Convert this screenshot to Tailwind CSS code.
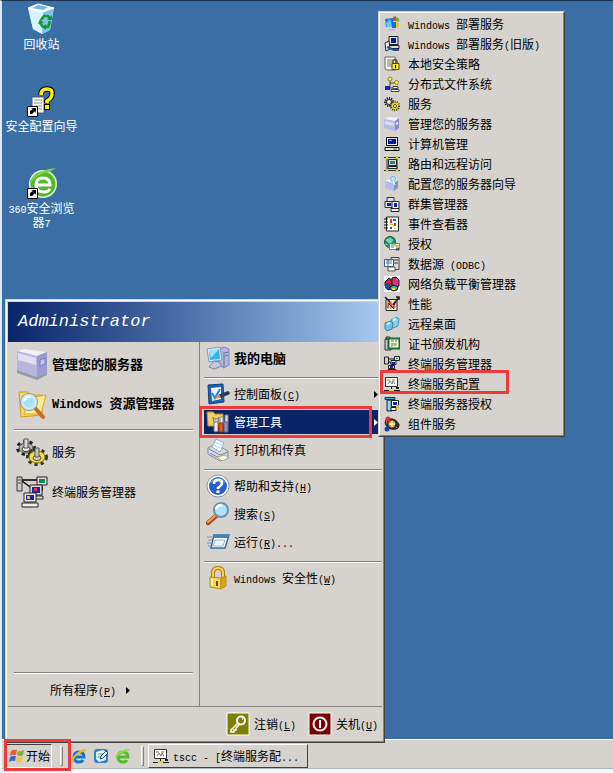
<!DOCTYPE html>
<html lang="zh-CN">
<head>
  <title>Windows Server 2003</title>
  <meta charset="UTF-8">
  <meta name="viewport" content="width=device-width, initial-scale=1.0">
  <script src="https://cdn.jsdelivr.net/npm/@tailwindcss/browser@4"></script>
</head>
<body class="min-h-screen flex flex-col overflow-hidden bg-[#f4fafc] text-black text-xs leading-4 font-['Noto_Sans_CJK_SC',sans-serif] [&_small]:text-[10px] [&_small]:leading-none [&_small]:font-['Liberation_Mono',monospace] [&_small]:whitespace-pre [&_svg]:shrink-0">

  <!-- Desktop -->
  <main class="relative flex-1 bg-[#3a6ea5] border-t border-t-[#16344f] border-l-2 border-l-[#dfe9f0]">
    <div class="flex flex-col items-start pl-0.5 pt-0.5 text-white [&_a]:w-[75px] [&_a]:h-[82px] [&_a]:flex [&_a]:flex-col [&_a]:items-center [&_a]:text-center [&_a]:leading-3 [&_a]:gap-[3px]">
      <a href="#recycle">
        <svg class="size-8" viewBox="0 0 32 32">
          <path d="M2 5L12 1l16 4-4 22-8 4-9-5z" fill="#a9dcf5"/>
          <path d="M2 5l15 4-1 22-9-5z" fill="#d8f3fd"/><path d="M17 9l11-4-4 22-8 4z" fill="#7fc3ea"/>
          <path d="M2 5L12 1l16 4-11 4z" fill="#eefaff" stroke="#fff"/>
          <path d="M6 5l6-3 10 2-5 3z" fill="#75b6df"/>
          <path d="M15 17l3-4h4l2 3M24 18l-2 6h-3M17 24l-3-4" fill="none" stroke="#129a2b" stroke-width="2.6"/>
          <path d="M21 17h5V12zM20 21v6l-4-3zM12 21l2-5 4 4z" fill="#129a2b"/>
        </svg>
        <span>回收站</span>
      </a>
      <a href="#wizard">
        <svg class="size-8" viewBox="0 0 32 32">
          <path d="M6 12h12v16H6z" fill="#fff" stroke="#555"/><path d="M8 15h8M8 18h8M8 21h8M8 24h8" stroke="#888"/>
          <path d="M15 10q0-6 6-6t5 5q0 4-5 7v2" fill="none" stroke="#000" stroke-width="5.500"/><path d="M18 19h6v6h-6z" fill="#000"/>
          <path d="M15 10q0-6 6-6t5 5q0 4-5 7v2" fill="none" stroke="#ffee10" stroke-width="3.500"/><path d="M19 20h4v4h-4z" fill="#ffee10"/>
          <path d="M1.500 21.500h10v10h-10z" fill="#fff" stroke="#000"/><path d="M4 29v-3l3-2-2-1h5v5l-1-2-3 3z"/>
        </svg>
        <span>安全配置向导</span>
      </a>
      <a href="#browser">
        <svg class="size-8" viewBox="0 0 32 32">
          <circle cx="17" cy="17" r="14" fill="#dff6cf"/><circle cx="17" cy="17" r="12.500" fill="#57b72c"/>
          <path d="M10 18h14q0-7-7-7t-7 7q0 7 8 7 4 0 6-3" fill="none" stroke="#fff" stroke-width="3"/>
          <path d="M3 14Q13 2 30 1q-4 3-8 4Q11 7 5 16z" fill="#7ed348"/>
          <path d="M1.500 21.500h10v10h-10z" fill="#fff" stroke="#000"/><path d="M4 29v-3l3-2-2-1h5v5l-1-2-3 3z"/>
        </svg>
        <span><small>360</small>安全浏览<br>器<small>7</small></span>
      </a>
    </div>

    <!-- Start menu -->
    <section class="absolute left-[3px] -bottom-1 z-10 w-[380px] bg-[#d6d3ce] border border-[#d6d3ce] border-r-[#404040] border-b-[#404040]">
      <div class="border border-white border-r-[#848284] border-b-[#848284] p-px">
        <h1 class="h-10 flex items-center pl-2.5 text-white italic text-[17px] font-['Liberation_Mono',monospace] bg-linear-to-r from-[#0a246a] to-[#a6caf0]">Administrator</h1>
        <div class="flex h-[364px]">
          <div class="w-[191px] flex flex-col px-1.5 pt-0.5 [&_button]:h-10 [&_button]:flex [&_button]:items-center [&_button]:gap-1 [&_button]:pl-0.5 [&_button]:text-left">
            <button class="font-bold text-[13px]">
              <svg class="size-8" viewBox="0 0 32 32">
                <path d="M1 3l7-2 22 3-9 4z" fill="#f1f1fd"/><path d="M1 3l20 5v21L1 22z" fill="#b6b6de"/><path d="M21 8l10-4v21l-10 5z" fill="#9a9bd0"/>
                <path d="M2 5l18 5v7L2 12z" fill="#dedef4"/><path d="M24 12l5-2v6l-5 2z" fill="#c8c9f0" stroke="#7a7bc0"/><path d="M1 22l20 7 10-4v2l-10 5L1 25z" fill="#939ba3"/>
              </svg>
              管理您的服务器
            </button>
            <button class="font-bold text-[13px]">
              <svg class="size-8" viewBox="0 0 32 32">
                <path d="M3 4h9l2 3h12v20L5 29z" fill="#f7d864" stroke="#d19e20"/><path d="M8 26l5-16 17-3-5 19z" fill="#ffeb91" stroke="#d9a72c"/>
                <path d="M19 20l8 9" stroke="#c96e26" stroke-width="4" stroke-linecap="round"/>
                <circle cx="13" cy="14" r="7" fill="#a6e4f8" stroke="#dce6ef" stroke-width="3"/><circle cx="13" cy="14" r="8.500" fill="none" stroke="#6f9dbb"/><path d="M8 13q2-5 7-4" stroke="#fff" stroke-width="2" fill="none"/>
              </svg>
              <span><span class="text-xs font-['Liberation_Mono',monospace] whitespace-pre">Windows </span>资源管理器</span>
            </button>
            <hr class="mt-[5px] mb-px border-t-[#848284] border-b border-b-white">
            <button>
              <svg class="size-8" viewBox="0 0 32 32">
                <ellipse cx="10" cy="12" rx="8" ry="6" fill="none" stroke="#222" stroke-width="4" stroke-dasharray="3 3"/><ellipse cx="10" cy="12" rx="7" ry="5" fill="#b4b4b4" stroke="#555"/><ellipse cx="10" cy="13" rx="4" ry="2.500" fill="#eee" stroke="#333"/><path d="M8 3h4v9H8z" fill="#d8d8d8" stroke="#555"/>
                <ellipse cx="21" cy="21" rx="9" ry="7" fill="none" stroke="#3c3705" stroke-width="4" stroke-dasharray="3 3"/><ellipse cx="21" cy="21" rx="8" ry="6" fill="#e8df55" stroke="#81770c"/><ellipse cx="21" cy="22" rx="4" ry="2.500" fill="#d6d3ce" stroke="#554f08"/><path d="M19 12h4v9h-4z" fill="#c4c4c4" stroke="#555"/>
              </svg>
              服务
            </button>
            <button>
              <svg class="size-8" viewBox="0 0 32 32">
                <path d="M5 4h18M6 5l11 8M26 10v5" stroke="#000" stroke-width="1.500"/>
                <path d="M1 1h5v14H1z" fill="#ccc" stroke="#333"/><path d="M2 4h3M2 7h3" stroke="#555"/>
                <path d="M21 1h10v8H21z" fill="#ddd" stroke="#222"/><path d="M23 3h6v4h-6z" fill="#0a8a5a"/>
                <path d="M14 9h12v10H14zM12 20h15v3H12z" fill="#ddd" stroke="#222"/><path d="M16 11h8v6h-8z" fill="#1222c5"/><path d="M18 12h3v3h-3z" fill="#e84040"/>
                <path d="M8 17h12v9H8zM6 27h16v4H6z" fill="#eee" stroke="#222"/><path d="M10 19h8v5h-8z" fill="#1222c5"/><path d="M11 20h3v3h-3z" fill="#f0c020"/>
              </svg>
              终端服务管理器
            </button>
            <hr class="mt-auto border-t-[#848284] border-b border-b-white">
            <button class="pl-9! h-8!">
              <span>所有程序<small>(<u>P</u>)</small></span>
              <svg class="ml-1.5 w-1 h-[7px]" viewBox="0 0 4 7"><path d="M0 0l4 3.500L0 7z"/></svg>
            </button>
          </div>
          <div class="flex-1 flex flex-col border-l border-[#848284] pl-1 pt-0.5 [&_button]:h-6 [&_button]:my-0.5 [&_button]:flex [&_button]:items-center [&_button]:gap-1 [&_button]:pl-0.5 [&_button]:text-left [&_button_svg]:-my-1 [&_hr]:mt-[5px] [&_hr]:mb-px [&_hr]:border-t-[#848284] [&_hr]:border-b [&_hr]:border-b-white">
            <button class="font-bold text-[13px]">
              <svg class="size-6" viewBox="0 0 24 24">
                <path d="M13 3l5-2 5 2v16l-5 3-5-3z" fill="#b5b6df" stroke="#8283b5"/><path d="M18 6v15M19 7l3-1M19 10l3-1" stroke="#6769a5"/>
                <path d="M1 3l13-2 2 13-13 2z" fill="#dce9f5" stroke="#809cb8"/><path d="M3 5l10-2 1 10-10 1z" fill="#35b4f0"/><path d="M3 5l10-2-8 9z" fill="#9ae5fd"/>
                <path d="M8 15l5 1 3 4-8 3-5-2z" fill="#c1c9db" stroke="#7586a5"/>
              </svg>
              我的电脑
            </button>
            <hr>
            <button>
              <svg class="size-6" viewBox="0 0 24 24">
                <path d="M2 3l15-1 1 18-15 2z" fill="#1d61b4" stroke="#15427c"/><path d="M5 6l10-1v12L6 19z" fill="#f2f9ff"/><path d="M6 11l3 5 5-9" fill="none" stroke="#2b83d9" stroke-width="2"/>
                <path d="M14 14l8-3" stroke="#273c59" stroke-width="3.500" stroke-linecap="round"/><path d="M10 16l4-2" stroke="#e79b3d" stroke-width="2.500"/>
              </svg>
              <span class="flex-1">控制面板<small>(<u>C</u>)</small></span>
              <svg class="mr-1 w-1 h-[7px]" viewBox="0 0 4 7"><path d="M0 0l4 3.500L0 7z"/></svg>
            </button>
            <button class="relative bg-[#0a246a] text-white mr-0.5">
              <svg class="size-6" viewBox="0 0 24 24">
                <path d="M1 2h6l2 2h8v12H2z" fill="#f3cf62" stroke="#b98b20"/>
                <path d="M8 10h4v11q-2 2-4 0z" fill="#e8e8ed" stroke="#777"/><path d="M7 7q3 4 6 0l-1 5H8z" fill="#ccc" stroke="#777"/>
                <path d="M14 7h3v7h-3z" fill="#eee" stroke="#888"/><path d="M13 13h4v9h-4z" fill="#e25a2c" stroke="#8e3010"/>
                <path d="M19 5h3v8h-3z" fill="#ddd" stroke="#888"/><path d="M18 12h4v10h-4z" fill="#8297ba" stroke="#54698c"/>
              </svg>
              <span class="flex-1">管理工具</span>
              <svg class="mr-0.5 w-1 h-[7px] fill-white" viewBox="0 0 4 7"><path d="M0 0l4 3.500L0 7z"/></svg>
              <span class="absolute -left-[5px] -top-1 -bottom-1 right-2 border-3 border-[#ee3a3c]"></span>
            </button>
            <button>
              <svg class="size-6" viewBox="0 0 24 24">
                <path d="M2 10l7-4 13 7v6l-8 4-12-7z" fill="#d6dae3" stroke="#878d9b"/><path d="M6 9l4-8 8 4-4 9z" fill="#fff" stroke="#8babca"/><path d="M9 4l7 3M8 7l6 3" stroke="#9ed4ee"/>
                <path d="M3 11l11 6 8-3M4 15l9 5" fill="none" stroke="#7b8290"/><path d="M11 19l5 4 7-3-4-3z" fill="#fffce4" stroke="#a5a279"/>
              </svg>
              打印机和传真
            </button>
            <hr>
            <button>
              <svg class="size-6" viewBox="0 0 24 24">
                <circle cx="12" cy="12" r="11" fill="#fff" stroke="#8790ad"/><circle cx="12" cy="12" r="9" fill="#2860cd"/><path d="M4 9a9 9 0 0116 0q-8-3-16 0z" fill="#6799ec"/>
                <path d="M8 10q0-4 4-4t4 3q0 2-4 5v1" fill="none" stroke="#fff" stroke-width="2.500"/><path d="M10.500 16.500h3v2.500h-3z" fill="#fff"/>
              </svg>
              <span>帮助和支持<small>(<u>H</u>)</small></span>
            </button>
            <button>
              <svg class="size-6" viewBox="0 0 24 24">
                <path d="M10 14l-8 7" stroke="#a84e17" stroke-width="4.500" stroke-linecap="round"/><path d="M9 14l-7 6" stroke="#f1a060" stroke-width="2" stroke-linecap="round"/>
                <circle cx="15" cy="8" r="7" fill="#afe3f8" stroke="#6a91b5" stroke-width="2"/><path d="M10 7q1-4 6-4" fill="none" stroke="#fff" stroke-width="2.500"/>
              </svg>
              <span>搜索<small>(<u>S</u>)</small></span>
            </button>
            <button>
              <svg class="size-6" viewBox="0 0 24 24">
                <path d="M8 5h15l-4 13H5z" fill="#fff" stroke="#376d9f" stroke-width="1.500"/><path d="M8 5h15l-1 3H7z" fill="#3c83bd"/><path d="M9 10h10l-2 6H7z" fill="#e8f3fb" stroke="#98bad5"/><path d="M1 7h5M2 10h4M1 13h4M2 16h3" stroke="#7895ad"/>
              </svg>
              <span>运行<small>(<u>R</u>)...</small></span>
            </button>
            <hr>
            <button>
              <svg class="size-6" viewBox="0 0 24 24">
                <path d="M7 11V7q0-5 5-5t5 5v4" fill="none" stroke="#a87a12" stroke-width="4"/><path d="M7 11V7q0-5 5-5t5 5v4" fill="none" stroke="#f7d54e" stroke-width="2"/>
                <path d="M4 11l11 1v11L4 21z" fill="#f9d550" stroke="#bb8c13"/><path d="M15 12l5-2v10l-5 3z" fill="#d9a421" stroke="#bb8c13"/><path d="M6 13v6" stroke="#fff6b4" stroke-width="2"/><path d="M11 15v5" stroke="#6d4a05" stroke-width="2"/>
              </svg>
              <span><small>Windows </small>安全性<small>(<u>W</u>)</small></span>
            </button>
          </div>
        </div>
        <div class="h-[34px] flex items-center justify-end gap-3 pr-1 border-t border-[#848284] [&_button]:flex [&_button]:items-center [&_button]:gap-1">
          <button>
            <svg class="size-6" viewBox="0 0 24 24">
              <path d="M1 1h22v22H1z" fill="#7f8000" stroke="#fff"/><circle cx="15" cy="8.500" r="4" fill="none" stroke="#fff" stroke-width="2"/><path d="M12 11l-7 7v2h3v-2h2v-2l4-4M16 7h1" fill="none" stroke="#fff" stroke-width="1.500"/>
            </svg>
            <span>注销<small>(<u>L</u>)</small></span>
          </button>
          <button>
            <svg class="size-6" viewBox="0 0 24 24">
              <path d="M1 1h22v22H1z" fill="#7b0004" stroke="#fff"/><circle cx="12" cy="12" r="6.500" fill="none" stroke="#fff" stroke-width="2"/><path d="M12 8v8" stroke="#fff" stroke-width="2"/>
            </svg>
            <span>关机<small>(<u>U</u>)</small></span>
          </button>
        </div>
      </div>
    </section>

    <!-- Administrative tools submenu -->
    <nav class="absolute left-[376px] bottom-[302px] z-20 w-[187px] bg-[#d6d3ce] border border-[#d6d3ce] border-r-[#404040] border-b-[#404040]">
      <ul class="border border-white border-r-[#848284] border-b-[#848284] p-px [&_button]:relative [&_button]:flex [&_button]:items-center [&_button]:w-full [&_button]:h-5 [&_button]:gap-2 [&_button]:pl-[3px] [&_button]:text-left [&_svg]:size-4">
        <li><button>
          <svg viewBox="0 0 16 16"><path d="M1 3l8-1v9H2z" fill="#1674df"/><path d="M1 4l2 3 2-4 2 2 1 6H3z" fill="#5cd0ff"/><path d="M9 1l3-1v5H9z" fill="#e84c27"/><path d="M12 1l3 1v4l-3-1z" fill="#6ab742"/><path d="M8 6h4v6H8z" fill="#2369d7"/><path d="M12 6l3 1v4l-3 1z" fill="#f4c231"/><path d="M4 13h8l-2 2H6z" fill="#c9b3e6"/></svg>
          <span><small>Windows </small>部署服务</span>
        </button></li>
        <li><button>
          <svg viewBox="0 0 16 16"><path d="M5 .5h9v8H5zM4 9.500h11v3H4z" fill="#ddd" stroke="#222"/><path d="M7 2h5v5H7z" fill="#0a1ca0"/><path d="M1 7l4-2 1 8-4 2z" fill="#fff" stroke="#224"/><path d="M3 11l7 3h5" fill="none" stroke="#234b9b" stroke-width="2"/></svg>
          <span><small>Windows </small>部署服务<small>(</small>旧版<small>)</small></span>
        </button></li>
        <li><button>
          <svg viewBox="0 0 16 16"><path d="M1 1h10l1 13H3q-2 0-2-2z" fill="#f7f7f2" stroke="#666"/><path d="M3 4h6M3 6h5M3 8h5M3 10h5" stroke="#777"/><path d="M9 8V5q2-3 4 0v3" fill="none" stroke="#554d00" stroke-width="1.500"/><path d="M8 7.500h7v6H8z" fill="#f5e538" stroke="#554d00"/><path d="M11 9h1v3h-1z"/></svg>
          本地安全策略
        </button></li>
        <li><button>
          <svg viewBox="0 0 16 16"><path d="M6 3v9h5M6 7h6" fill="none" stroke="#444"/><circle cx="6" cy="3" r="2" fill="#f1eb54" stroke="#908910"/><circle cx="12.500" cy="6.500" r="2" fill="#f1eb54" stroke="#908910"/><path d="M1 10h5v4H1z" fill="#1425a5"/><path d="M9 10.500h5v2H9zM7 13.500h8v2H7z" fill="#fff" stroke="#444"/></svg>
          分布式文件系统
        </button></li>
        <li><button>
          <svg viewBox="0 0 16 16"><circle cx="5" cy="6" r="3.500" fill="#aaa" stroke="#111" stroke-width="3" stroke-dasharray="1 1"/><circle cx="5" cy="6" r="2.500" fill="#eee" stroke="#333"/><circle cx="11" cy="10" r="4" fill="#eadf37" stroke="#484200" stroke-width="2.500" stroke-dasharray="1 1"/><circle cx="11" cy="10" r="3" fill="#eadf37"/><circle cx="11" cy="10" r="1.500" fill="#fff" stroke="#554d00"/></svg>
          服务
        </button></li>
        <li><button>
          <svg viewBox="0 0 16 16"><path d="M0 3l5-2 10 1-4 3z" fill="#efefff"/><path d="M0 3l11 2v10L0 12z" fill="#b9bbe6"/><path d="M11 5l4-3v10l-4 3z" fill="#898bc6"/><path d="M1 5l9 2v3L1 8z" fill="#dadcf8"/><path d="M12 7l2-1v2l-2 1z" fill="#fff"/></svg>
          管理您的服务器
        </button></li>
        <li><button>
          <svg viewBox="0 0 16 16"><path d="M2.500 1.500h11v8h-11zM1 11.500h14v3H1z" fill="#e4e4e4" stroke="#111"/><path d="M4 3h8v5H4z" fill="#0917a0"/><path d="M5 4h3v1H5z" fill="#6bbde8"/><path d="M9 13h4" stroke="#228b22"/></svg>
          计算机管理
        </button></li>
        <li><button>
          <svg viewBox="0 0 16 16"><path d="M0 1.500h16M0 14.500h16M3 1v13M13 1v13" stroke="#333"/><path d="M2 0h2v3H2zM12 0h2v3h-2zM2 13h2v3H2zM12 13h2v3h-2z" fill="#d4d329"/><path d="M4.500 3.500h8v6h-8zM4 10.500h9v2H4z" fill="#ddd" stroke="#222"/><path d="M6 5h5v3H6z" fill="#159273"/></svg>
          路由和远程访问
        </button></li>
        <li><button>
          <svg viewBox="0 0 16 16"><path d="M1 5l6-3 7 2-4 3z" fill="#f2f5ff"/><path d="M1 5l9 2v8l-9-3z" fill="#b4bee9"/><path d="M10 7l4-3v8l-4 3z" fill="#8792cb"/><circle cx="9" cy="3" r="2.500" fill="#b5e8ff" stroke="#6eb4dd"/><path d="M9 5l2 4" stroke="#fff"/></svg>
          配置您的服务器向导
        </button></li>
        <li><button>
          <svg viewBox="0 0 16 16"><path d="M3 1.500h7v4H3zM1 5.500h8v6H1z" fill="#ddd" stroke="#333"/><path d="M3 7h4v3H3z" fill="#1422a5"/><path d="M8 5.500h7v7H8zM7 12.500h8v3H7z" fill="#eee" stroke="#222"/><path d="M10 7h3v4h-3z" fill="#1422a5"/></svg>
          群集管理器
        </button></li>
        <li><button>
          <svg viewBox="0 0 16 16"><path d="M2.500 1h12v14h-12z" fill="#fff" stroke="#222"/><path d="M0 3h4M0 6h4M0 9h4M0 12h4" stroke="#111"/><path d="M6 3h2v4H6zM10 7h2v3h-2z" fill="#e53327"/><path d="M9 3h3v2H9zM6 11h2v2H6z" fill="#184ec1"/><path d="M6 8h3v1H6zM10 12h2v1h-2z" fill="#edb81f"/></svg>
          事件查看器
        </button></li>
        <li><button>
          <svg viewBox="0 0 16 16"><circle cx="6" cy="6" r="5.500" fill="#219358" stroke="#135a40"/><path d="M2 4l4-2 3 2-3 4zM1 8l3 1" fill="#75d4bf" stroke="#75d4bf"/><path d="M5.500 7.500h10v6h-10z" fill="#fff" stroke="#657ca5"/><path d="M7 9h5M7 11h3" stroke="#5471b8"/><path d="M12 10h3v5l-1.500-1L12 15z" fill="#31506e"/><circle cx="13.500" cy="10.500" r="2" fill="#e9c633"/></svg>
          授权
        </button></li>
        <li><button>
          <svg viewBox="0 0 16 16"><path d="M7 1.500h8v12H7z" fill="#ddd" stroke="#444"/><path d="M9 4h5M9 7h5" stroke="#333"/><path d="M.5 3.500h9v7h-9z" fill="#f4f8fc" stroke="#4d5f70"/><path d="M2 5h6M2 7h6M4 4v6" stroke="#4587b4"/><path d="M4 11h7v4H4z" fill="#f4f4f4" stroke="#555"/></svg>
          <span>数据源<small> (ODBC)</small></span>
        </button></li>
        <li><button>
          <svg viewBox="0 0 16 16"><path d="M0 0h16v16H0z" fill="#fff"/><path d="M1 6l4-4 4 3v7l-5 2-3-4z" fill="#d51f2c" stroke="#111"/><path d="M8 2l4-1 3 3v6l-4 2-3-3z" fill="#d33684" stroke="#111"/><path d="M1 8l4-1 2 4-3 3-3-2z" fill="#194a9c"/><path d="M6 11l4-2 4 2-1 3-4 1-3-2z" fill="#29c3a8" stroke="#111"/><path d="M8 12h3v2H8z" fill="#f1dc2f"/></svg>
          网络负载平衡管理器
        </button></li>
        <li><button>
          <svg viewBox="0 0 16 16"><path d="M2 3.500h11v11H2z" fill="#fff3d0" stroke="#222"/><path d="M4 5v8M7 5v8M10 5v8M3 8h9M3 11h9" stroke="#a57b62"/><path d="M3 12l3-6 3 6 3-7" fill="none" stroke="#d2292c"/><path d="M1 1l5 5M15 1l-6 8M12 1h3v3" fill="none" stroke="#222" stroke-width="1.500"/><path d="M4 7l6 6" stroke="#1725ae"/></svg>
          性能
        </button></li>
        <li><button>
          <svg viewBox="0 0 16 16"><path d="M7 4l6-3 2 2-1 7-5 2-2-2z" fill="#86cdea" stroke="#4b91b7"/><path d="M1 7l6-2 2 2-1 6-5 2-2-2z" fill="#6cc4e7" stroke="#397ea7"/><path d="M3 8l3-1M9 4l3-1" stroke="#d6f8ff" stroke-width="2"/></svg>
          远程桌面
        </button></li>
        <li><button>
          <svg viewBox="0 0 16 16"><path d="M1 3h6v11H1zM2 1h4v2H2z" fill="#bfc9c0" stroke="#333"/><path d="M4.500 2.500h11v10h-11z" fill="#fff" stroke="#156c28" stroke-width="2"/><path d="M7 5h3M11 5h2M7 8h6M7 10h2" stroke="#278342"/><circle cx="11" cy="9" r="1.500" fill="#d6bb28"/></svg>
          证书颁发机构
        </button></li>
        <li><button>
          <svg viewBox="0 0 16 16"><path d="M3 3h10L8 9z" fill="none" stroke="#111"/><path d="M.5 1h4v7h-4z" fill="#ccc" stroke="#222"/><path d="M10.500.5h5v4h-5zM7 4.500h5v4H7zM4.500 9.500h6v3h-6zM4 13.500h8v2H4z" fill="#ddd" stroke="#222"/><path d="M12 2h2v1h-2z" fill="#168a58"/><path d="M8 6h3v2H8zM6 10h3v2H6z" fill="#1725be"/></svg>
          终端服务管理器
        </button></li>
        <li><button>
          <svg viewBox="0 0 16 16"><path d="M1.500 1.500h12v9h-12z" fill="#fff" stroke="#333"/><path d="M3 4h3M8 4h3M4 8l2-3 2 3 1-3 2 3" fill="none" stroke="#777"/><path d="M7.500 11v3M0 14.500h16" stroke="#111"/><path d="M5 13h5v2H5z" fill="#e5d936"/><path d="M12 11h3v2h-3z" fill="#222"/></svg>
          终端服务配置
          <span class="absolute -left-px -top-1 bottom-0 w-[129px] border-3 border-[#ee3a3c]"></span>
        </button></li>
        <li><button>
          <svg viewBox="0 0 16 16"><path d="M1 1.500h10v2H1zM3 4h5v11H3z" fill="#55a6cd" stroke="#234"/><path d="M5 5v9" stroke="#fff"/><path d="M7.500 4.500h7v6h-7zM7 11.500h5v3H7z" fill="#fff" stroke="#222"/><path d="M9 6h4v3H9z" fill="#1727b5"/><path d="M12 9h3v4l-1.500-1L12 13z" fill="#dfc327"/></svg>
          终端服务器授权
        </button></li>
        <li><button>
          <svg viewBox="0 0 16 16"><ellipse cx="8" cy="8" rx="7" ry="4.500" fill="none" stroke="#222" stroke-width="1.500" transform="rotate(25 8 8)"/><circle cx="8" cy="8" r="4.500" fill="#c79a35" stroke="#3c2b0b" stroke-width="2"/><path d="M8 5v6M5 8h6" stroke="#fff3b0" stroke-width="1.500"/><circle cx="4" cy="3" r="2.500" fill="#df2c25"/><circle cx="3" cy="13" r="2.500" fill="#1739d1"/><circle cx="13.500" cy="9" r="2" fill="#212c36"/></svg>
          组件服务
        </button></li>
      </ul>
    </nav>
  </main>

  <!-- Taskbar -->
  <footer class="ml-0.5 h-[30px] mb-1 flex items-center bg-[#d6d3ce] border-t border-t-white border-b border-b-[#b5b3ae] pt-1 pl-1">
    <button class="relative h-6 w-[46px] flex items-center gap-px pl-0.5 border border-[#404040] border-r-white border-b-white">
      <svg class="size-4" viewBox="0 0 16 16"><path d="M2 3q3-2 6-1L7 7Q4 6 1 8z" fill="#eb5b2c"/><path d="M9 3q3 1 6-1l-1 5q-3 2-6 0z" fill="#6cb33f"/><path d="M1 9q3-2 6-1l-1 5q-3-1-6 1z" fill="#326ed2"/><path d="M8 8q3 2 6 0l-1 5q-3 2-6 1z" fill="#f6c534"/></svg>
      开始
      <span class="absolute -left-[3px] -top-[6px] -bottom-[4px] w-[67px] z-20 border-3 border-[#ee3a3c]"></span>
    </button>
    <span class="ml-2 h-5 w-[3px] border border-white border-r-[#848284] border-b-[#848284]"></span>
    <div class="ml-2 flex items-center gap-1.5 [&_svg]:size-4">
      <button aria-label="Internet Explorer">
        <svg viewBox="0 0 16 16"><path d="M4 9h9q0-5-5-5T3 9q0 5 5 5 3 0 4-2" fill="none" stroke="#1675cf" stroke-width="3"/><path d="M1 15Q-1 10 7 4q7-5 8-2 0 2-2 3 1-3-5 1Q2 10 3 13z" fill="#f0b52c"/></svg>
      </button>
      <button aria-label="显示桌面">
        <svg viewBox="0 0 16 16"><rect x="1" y="1" width="14" height="14" rx="3" fill="#2b82ca"/><path d="M3 4l7-2 3 2v8l-7 2-3-3z" fill="#e7f7ff"/><path d="M5 6h5M5 9h3" stroke="#4494c9"/><path d="M7 11l1-3 5-5 2 2-5 5z" fill="#fff" stroke="#175d9b"/></svg>
      </button>
      <button aria-label="360安全浏览器">
        <svg viewBox="0 0 16 16"><path d="M4 9h9q0-5-5-5T3 9q0 5 5 5 3 0 4-2" fill="none" stroke="#58bd2c" stroke-width="3"/><path d="M0 9Q5 1 15 1q-1 2-5 3-6 1-8 6z" fill="#94d94b"/></svg>
      </button>
    </div>
    <span class="ml-2.5 h-5 w-[3px] border border-white border-r-[#848284] border-b-[#848284]"></span>
    <button class="ml-1 h-6 w-40 flex items-center gap-1 pl-1 border border-white border-r-[#404040] border-b-[#404040]">
      <svg class="size-4" viewBox="0 0 16 16"><path d="M1.500 1.500h12v9h-12z" fill="#fff" stroke="#333"/><path d="M3 4h3M8 4h3M4 8l2-3 2 3 1-3 2 3" fill="none" stroke="#777"/><path d="M7.500 11v3M0 14.500h16" stroke="#111"/><path d="M5 13h5v2H5z" fill="#e5d936"/><path d="M12 11h3v2h-3z" fill="#222"/></svg>
      <span><small>tscc - [</small>终端服务配<small>...</small></span>
    </button>
  </footer>
</body>
</html>
